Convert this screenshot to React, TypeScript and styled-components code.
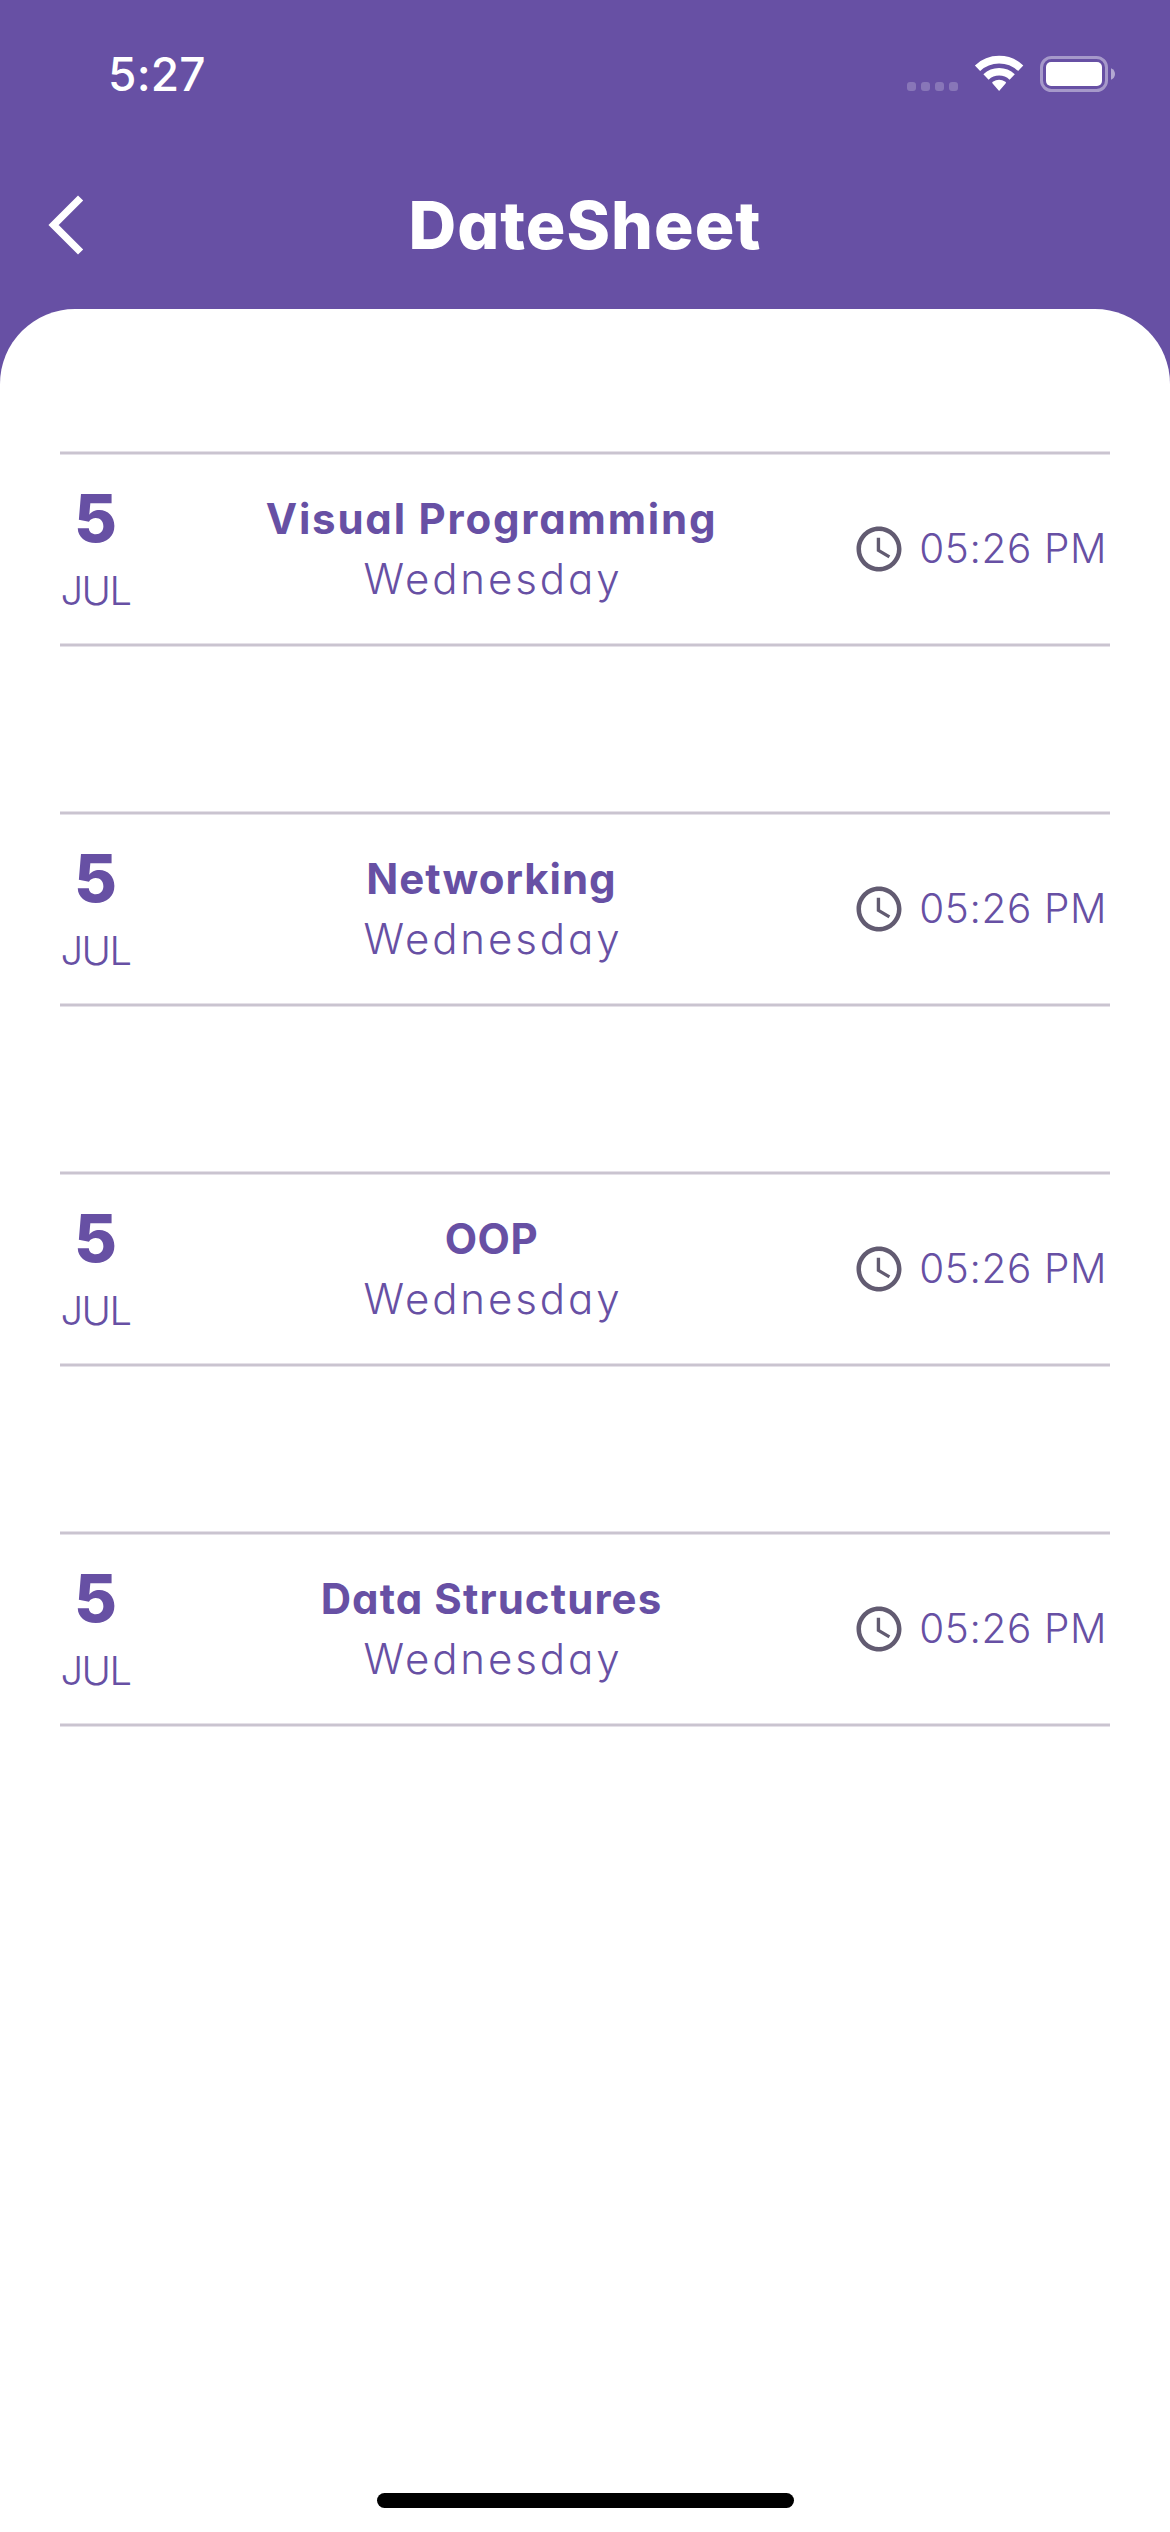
import React from "react";
import styled, { createGlobalStyle } from "styled-components";
import { MdAccessTime } from "react-icons/md";

const PURPLE = "#6750a4";

const GlobalStyle = createGlobalStyle`
  html, body { margin: 0; padding: 0; background: #fff; }
  * { box-sizing: border-box; }
`;

const Screen = styled.div`
  width: 1170px;
  height: 2532px;
  display: flex;
  flex-direction: column;
  overflow: hidden;
  background: ${PURPLE};
  color: ${PURPLE};
  font-family: Inter, "Open Sans", sans-serif;
  font-feature-settings: "cv11" 1;
  white-space: nowrap;
`;

const StatusBar = styled.header`
  height: 141px;
  display: flex;
  justify-content: space-between;
  padding: 0 55px 0 108px;
`;

const Clock = styled.span`
  color: #fff;
  font-size: 46px;
  font-weight: 500;
  line-height: 56px;
  letter-spacing: 0.2px;
  padding-top: 46px;
`;

const StatusIcons = styled.svg`
  display: block;
  width: 208px;
  height: 36px;
  margin-top: 56px;
  overflow: visible;
`;

const TitleBar = styled.nav`
  height: 168px;
  display: grid;
  grid-template-columns: 120px 1fr 120px;
  align-items: center;
`;

const BackButton = styled.button`
  height: 60px;
  padding: 0 0 0 48px;
  border: 0;
  background: none;
  color: #fff;
  svg { display: block; }
`;

const Title = styled.h1`
  margin: 0;
  color: #fff;
  font-size: 66px;
  font-weight: 780;
  line-height: 78px;
  letter-spacing: 1px;
  text-align: center;
`;

const Sheet = styled.main`
  flex: 1;
  display: flex;
  flex-direction: column;
  gap: 164px;
  padding: 142px 60px 24px;
  background: #fff;
  border-radius: 75px 75px 0 0;
`;

const Exam = styled.section`
  height: 196px;
  display: flex;
  flex-direction: column;
`;

const Divider = styled.div`
  height: 4px;
  background: #cac4d0;
  border: solid #e5e1e8;
  border-width: 1px 0;
`;

const ExamBody = styled.div`
  flex: 1;
  display: flex;
`;

const DateColumn = styled.div`
  width: 71px;
  display: flex;
  flex-direction: column;
  align-items: center;
  padding-top: 23px;
`;

const Day = styled.strong`
  font-size: 66px;
  font-weight: 760;
  line-height: 80px;
`;

const Month = styled.span`
  font-size: 40px;
  font-weight: 330;
  line-height: 48px;
  letter-spacing: -1.6px;
  margin-top: 9px;
`;

const Details = styled.div`
  flex: 1;
  display: flex;
  flex-direction: column;
  align-items: center;
  padding-top: 34px;
`;

const Subject = styled.strong<{ $tracking: number }>`
  font-size: 42px;
  font-weight: 730;
  line-height: 60px;
  letter-spacing: ${(p) => p.$tracking}px;
`;

const Weekday = styled.span`
  font-size: 42px;
  font-weight: 330;
  line-height: 60px;
  letter-spacing: 2.9px;
  padding-left: 3px;
`;

const TimeSlot = styled.div`
  width: 258px;
  display: flex;
  align-items: center;
  justify-content: space-between;
  color: #625b71;
  svg { display: block; }
`;

const Time = styled.time`
  color: ${PURPLE};
  font-size: 40.5px;
  font-weight: 330;
  line-height: 60px;
  letter-spacing: 0.6px;
  padding-right: 3px;
`;

const HomeIndicator = styled.div`
  width: 417px;
  height: 15px;
  margin: auto auto 0;
  border-radius: 8px;
  background: #000;
`;

interface ExamEntry {
  subject: string;
  tracking: number;
}

const exams: ExamEntry[] = [
  { subject: "Visual Programming", tracking: 1.8 },
  { subject: "Networking", tracking: 1 },
  { subject: "OOP", tracking: 0.6 },
  { subject: "Data Structures", tracking: 1.1 },
];

function StatusGlyphs() {
  return (
    <StatusIcons viewBox="907 56 208 36">
      <g fill="#fff" fillOpacity="0.22">
        {[907, 921, 935, 949].map((x) => (
          <rect key={x} x={x} y="82" width="9" height="9" rx="3" />
        ))}
      </g>
      <g fill="none" stroke="#fff" strokeWidth="7.6">
        <path d="M977.5 68.2A31.5 31.5 0 0 1 1020.7 68.2" />
        <path d="M986 77A19 19 0 0 1 1012.2 77" />
      </g>
      <path d="M992.6 83.4Q991.6 82.4 992.8 81.7A11.5 11.5 0 0 1 1005.4 81.7Q1006.6 82.4 1005.6 83.4L999.1 91Z" fill="#fff" />
      <rect x="1041.5" y="57.5" width="65" height="33" rx="10" fill="none" stroke="#fff" strokeOpacity="0.42" strokeWidth="3" />
      <rect x="1046" y="62" width="56" height="24" rx="5" fill="#fff" />
      <path d="M1111 68.2Q1115 70 1115 74T1111 79.8Z" fill="#fff" fillOpacity="0.5" />
    </StatusIcons>
  );
}

export default function App() {
  return (
    <Screen>
      <GlobalStyle />
      <StatusBar>
        <Clock>5:27</Clock>
        <StatusGlyphs />
      </StatusBar>
      <TitleBar>
        <BackButton aria-label="Back">
          <svg width="36" height="60" viewBox="0 0 36 60">
            <path d="M32.6 3L5.6 30L32.6 57" fill="none" stroke="#fff" strokeWidth="7.3" />
          </svg>
        </BackButton>
        <Title>DateSheet</Title>
      </TitleBar>
      <Sheet>
        {exams.map((exam) => (
          <Exam key={exam.subject}>
            <Divider />
            <ExamBody>
              <DateColumn>
                <Day>5</Day>
                <Month>JUL</Month>
              </DateColumn>
              <Details>
                <Subject $tracking={exam.tracking}>{exam.subject}</Subject>
                <Weekday>Wednesday</Weekday>
              </Details>
              <TimeSlot>
                <MdAccessTime size={54} />
                <Time>05:26 PM</Time>
              </TimeSlot>
            </ExamBody>
            <Divider />
          </Exam>
        ))}
        <HomeIndicator />
      </Sheet>
    </Screen>
  );
}
